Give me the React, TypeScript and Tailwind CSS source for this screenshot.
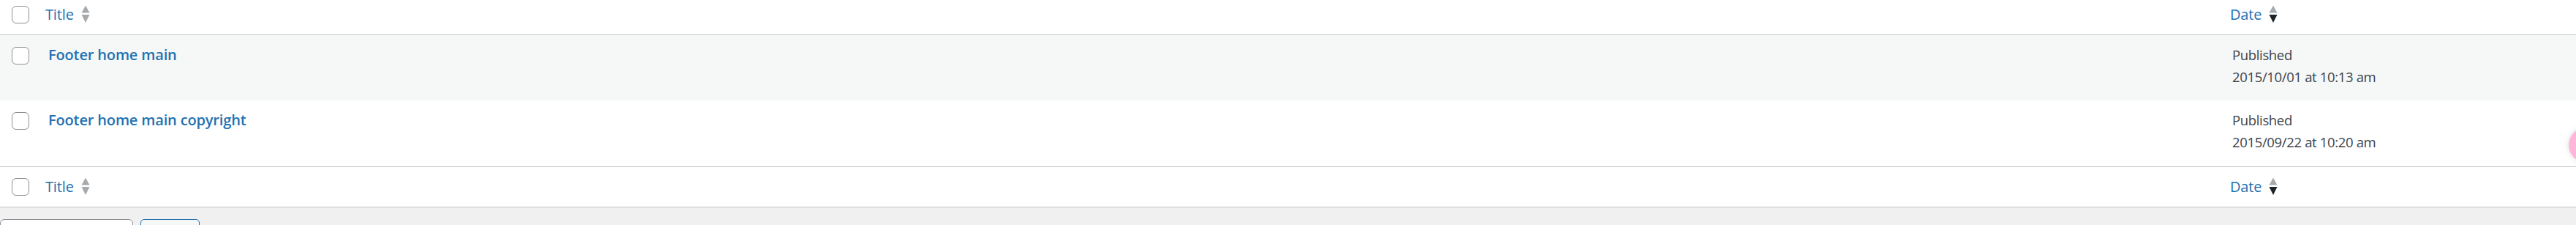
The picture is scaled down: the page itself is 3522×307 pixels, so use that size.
const font = "font-['Open_Sans',sans-serif]";

function SortIcon({ active = false }: { active?: boolean }) {
  return (
    <svg width="12" height="24" viewBox="0 0 12 24" className="shrink-0">
      <polygon points="0.5,10.5 6,0.5 11.5,10.5" fill="#a7aaad" />
      <polygon
        points="0.5,13 11.5,13 6,24"
        fill={active ? "#1d2327" : "#a7aaad"}
      />
    </svg>
  );
}

function Checkbox() {
  return (
    <span className="block w-[24px] h-[24px] rounded-[6px] border border-[#8c8f94] bg-white" />
  );
}

function HeadRow({ footer = false }: { footer?: boolean }) {
  const pad = footer ? "pt-[15px]" : "pt-[8px]";
  return (
    <div
      className={`flex ${footer ? "h-[55px]" : "h-[48px]"} border-b border-[#c3c4c7] bg-white`}
    >
      <div className={`w-[46px] shrink-0 pl-[16px] ${pad}`}>
        <Checkbox />
      </div>
      <div className={`flex-1 flex items-start gap-[10px] pl-[16px] ${pad}`}>
        <span className="text-[20px] leading-[24px] tracking-[-0.15px] text-[#2271b1]">Title</span>
        <span className="-mt-[1px]">
          <SortIcon />
        </span>
      </div>
      <div className={`w-[485px] shrink-0 flex items-start gap-[10px] pl-[12px] ${pad}`}>
        <span className="text-[20px] leading-[24px] tracking-[-0.15px] text-[#2271b1]">Date</span>
        <span className="-mt-[1px]">
          <SortIcon active />
        </span>
      </div>
    </div>
  );
}

function Row({
  title,
  date,
  striped,
}: {
  title: string;
  date: string;
  striped?: boolean;
}) {
  return (
    <div className={`flex ${striped ? "h-[89px] bg-[#f6f7f7]" : "h-[90px] bg-white"}`}>
      <div className="w-[46px] shrink-0 pl-[16px] pt-[16px]">
        <Checkbox />
      </div>
      <div className="flex-1 pl-[20px] pt-[15px]">
        <a className="text-[20px] leading-[24px] font-semibold tracking-[-0.15px] text-[#2271b1]">
          {title}
        </a>
      </div>
      <div className="w-[485px] shrink-0 pl-[15px] pt-[12px] text-[18.5px] leading-[29.5px] tracking-[-0.35px] text-[#3c434a]">
        <div>Published</div>
        <div>{date}</div>
      </div>
    </div>
  );
}

export default function App() {
  return (
    <div className={`${font} relative h-[307px] w-full overflow-hidden bg-[#f0f0f1]`}>
      <div className="bg-white">
        <HeadRow />
        <Row title="Footer home main" date="2015/10/01 at 10:13 am" striped />
        <div className="border-b border-[#c3c4c7]">
          <Row title="Footer home main copyright" date="2015/09/22 at 10:20 am" />
        </div>
        <HeadRow footer />
      </div>
      <div className="flex items-start gap-[10px] pt-[16px]">
        <div className="w-[182px] h-[45px] rounded-[6px] border border-[#8c8f94] bg-white" />
        <div className="w-[81px] h-[45px] rounded-[5px] border border-[#2271b1] bg-[#f6f7f7]" />
      </div>
      <div className="absolute left-[3512px] top-[174px] w-[48px] h-[48px] rounded-full bg-[#ffb6d9] shadow-[0_0_8px_rgba(0,0,0,0.12)]" />
    </div>
  );
}
